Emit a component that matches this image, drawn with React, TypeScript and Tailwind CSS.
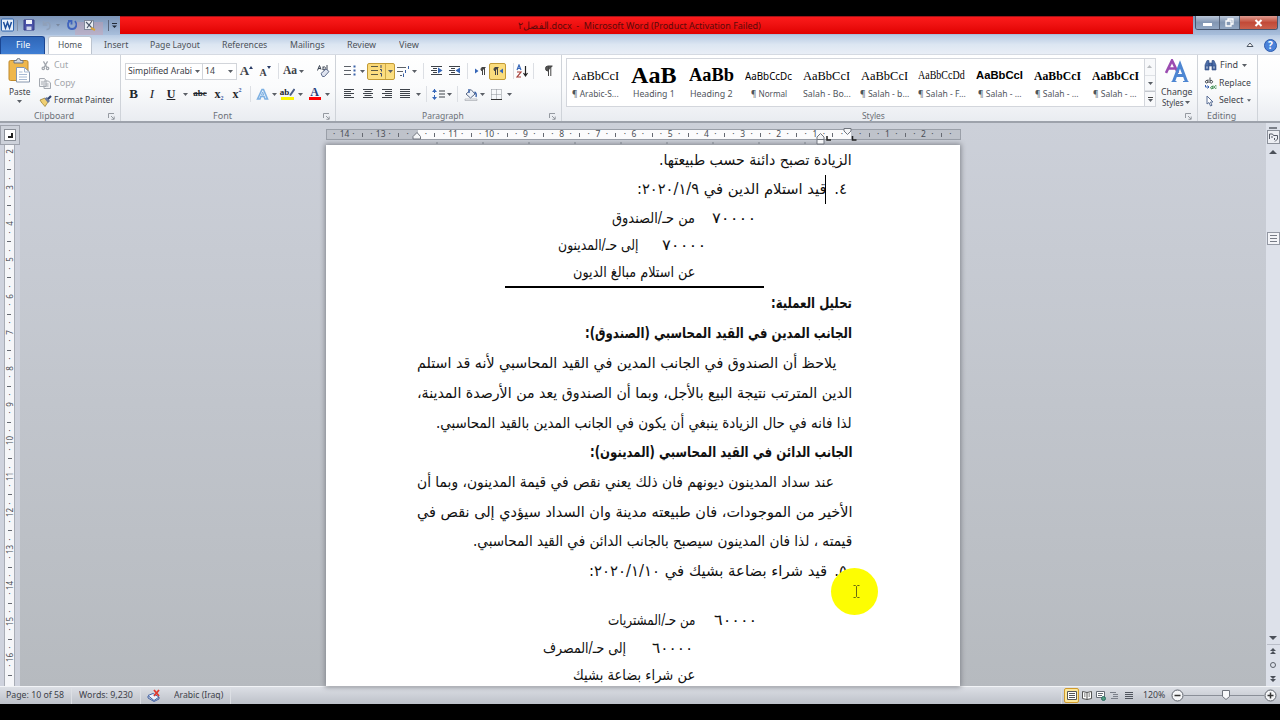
import { useLayoutEffect, useRef, useState } from "react";
import type { ReactNode } from "react";

interface BoxProps {
  className?: string;
  children?: ReactNode;
}

/** Keeps a run of text on one line and stretches it to the given width */
function Fit({ w, rtl, className = "", children }: BoxProps & { w: number; rtl?: boolean }) {
  const ref = useRef<HTMLSpanElement>(null);
  const [scale, setScale] = useState(1);

  useLayoutEffect(() => {
    if (ref.current) setScale(w / ref.current.offsetWidth);
  }, [w, children]);

  return (
    <span dir={rtl ? "rtl" : "ltr"} className={`flex shrink-0 ${className}`} style={{ width: w }}>
      <span
        ref={ref}
        className={`inline-block shrink-0 whitespace-nowrap ${rtl ? "origin-right" : "origin-left"}`}
        style={{ transform: `scaleX(${scale})` }}
      >
        {children}
      </span>
    </span>
  );
}

function Slot({ className = "", children }: BoxProps) {
  return <div className={`flex h-full shrink-0 items-center justify-center ${className}`}>{children}</div>;
}

function Tri({ className = "w-2" }: BoxProps) {
  return (
    <Slot className={className}>
      <svg width="5" height="3" viewBox="0 0 5 3"><path d="M0 0h5L2.5 3z" fill="#5a5f66" /></svg>
    </Slot>
  );
}

function Sep({ className = "w-2" }: BoxProps) {
  return (
    <Slot className={className}>
      <div className="h-4 w-px bg-[#dcdfe4]" />
    </Slot>
  );
}

function Launcher() {
  return (
    <svg width="7" height="7" viewBox="0 0 7 7" fill="none" stroke="#8b9097" strokeWidth="0.9">
      <path d="M.5 5V.5H6M3 3l3 3M6.2 3.5v2.8H3.4" />
    </svg>
  );
}

function Group({ label, w, launcher, className = "", children }: BoxProps & { label: string; w: number; launcher?: boolean }) {
  return (
    <div className={`flex shrink-0 flex-col border-r border-[#cfd3d9] ${className}`}>
      <div className="flex h-[54px] shrink-0 flex-col">{children}</div>
      <div className="flex h-[12px] items-center pt-[3px] text-[#6b7077]">
        <div className="flex flex-1 justify-center">
          <Fit w={w}>{label}</Fit>
        </div>
        <div className="w-3">{launcher && <Launcher />}</div>
      </div>
    </div>
  );
}

/* ---------- title bar ---------- */

function TitleBar() {
  return (
    <div className="flex h-[19px] shrink-0 bg-gradient-to-b from-[#7d95b8] to-[#a9bfdc]">
      <div className="flex w-[120px] items-center">
        <svg width="120" height="19" viewBox="0 0 120 19" fill="none">
          <rect x="75" y="6" width="28" height="13" fill="#d79aa8" opacity=".35" />
          <rect x="1.5" y="3" width="12" height="12" rx="1" fill="#e8f0fa" stroke="#2b62ad" />
          <path d="M3.500 6l2 6 2-5.500 2 5.500 2-6" stroke="#1d4f9c" strokeWidth="1.500" />
          <path d="M17.500 4v11" stroke="#8190a6" />
          <path d="M24 4h10v10H24z" fill="#4a52a8" stroke="#363d86" />
          <path d="M26 4h6v4h-6z" fill="#f2f4fb" />
          <path d="M26.500 10.500h5V14h-5z" fill="#cdd3ea" />
          <path d="M44 8.500c3-3.500 6-2 6 1s-2 4-3.500 4M43.500 5v4h4" stroke="#8fa0b9" strokeWidth="1.600" />
          <path d="M56 8h4l-2 2.500z" fill="#7a899f" />
          <path d="M69.500 5c-2.500 2.500-2 8 2.500 8 4.500 0 5.500-5 3-8M68 5h3.500v3.500" stroke="#3f63bd" strokeWidth="1.800" />
          <rect x="84.500" y="4.500" width="9" height="9" fill="#e9edf3" stroke="#7d8799" />
          <path d="M86 6l7 7M92 5l-5 7" stroke="#4a566a" strokeWidth="1.100" />
          <path d="M91 12l4 2" stroke="#d7a43a" strokeWidth="2" />
          <path d="M108.500 4v11" stroke="#59677d" />
          <path d="M112 7.500h5" stroke="#222b38" />
          <path d="M112 9.500h5l-2.500 2.500z" fill="#222b38" />
        </svg>
      </div>
      <div className="flex h-[18px] w-[1073px] items-center border-t border-[#a41218] bg-gradient-to-b from-[#fb1b1b] to-[#e00000] pt-px pl-[398px] text-[9.500px] text-[#5c0a0a]">
        <Fit w={243}>الفصل٢.docx&nbsp; -&nbsp; Microsoft Word (Product Activation Failed)</Fit>
      </div>
      <div className="ml-[2px] flex h-[14px] overflow-hidden rounded-b-[3px] border border-t-0 border-[#47566e]">
        <div className="flex w-[24px] items-center justify-center border-r border-[#55637a] bg-gradient-to-b from-[#b9c6d8] via-[#8397b3] to-[#92a7c2]">
          <div className="mt-1 h-[3px] w-[9px] bg-white" />
        </div>
        <div className="flex w-[20px] items-center justify-center border-r border-[#55637a] bg-gradient-to-b from-[#b9c6d8] via-[#8397b3] to-[#92a7c2]">
          <svg width="9" height="9" viewBox="0 0 9 9" fill="none" stroke="#fff" strokeWidth="1.300">
            <path d="M3 2.500V1h5v5H6.500M1 3h5v5H1z" />
          </svg>
        </div>
        <div className="flex w-[37px] items-center justify-center bg-gradient-to-b from-[#dc9a90] via-[#c24a38] to-[#c9604c]">
          <svg width="9" height="8" viewBox="0 0 9 8" stroke="#fff" strokeWidth="2"><path d="M1.500 1l6 6M7.500 1l-6 6" /></svg>
        </div>
      </div>
    </div>
  );
}

const tabs = [
  { label: "Insert", slot: "w-[48px]", w: 24 },
  { label: "Page Layout", slot: "w-[70px]", w: 50 },
  { label: "References", slot: "w-[69px]", w: 45 },
  { label: "Mailings", slot: "w-[56px]", w: 35 },
  { label: "Review", slot: "w-[53px]", w: 29 },
  { label: "View", slot: "w-[41px]", w: 20 },
];

function TabBar() {
  return (
    <div className="flex h-[19px] shrink-0 items-end bg-gradient-to-b from-[#b7cae3] via-[#dce6f2] to-[#e9eef6] text-[9.500px] text-[#4c5259]">
      <div className="flex h-[18px] w-[45px] items-center justify-center rounded-t-[3px] border border-b-0 border-[#1b4692] bg-gradient-to-b from-[#2f66b8] to-[#3f7fd4] text-white">
        <Fit w={14}>File</Fit>
      </div>
      <div className="ml-[3px] flex h-[18px] w-[44px] items-center justify-center rounded-t-[3px] border border-b-0 border-[#bcc4cf] bg-white">
        <Fit w={24}>Home</Fit>
      </div>
      {tabs.map((t) => (
        <div key={t.label} className={`flex h-[18px] items-center justify-center ${t.slot}`}>
          <Fit w={t.w}>{t.label}</Fit>
        </div>
      ))}
      <div className="mr-[3px] ml-auto flex h-[18px] items-center gap-[10px]">
        <svg width="8" height="6" viewBox="0 0 8 6" fill="#fff" stroke="#4b5563"><path d="M1 4.500L4 1l3 3.500z" /></svg>
        <div className="flex size-[13px] items-center justify-center rounded-full border border-[#2e5cad] bg-[#4b83da] text-[10px] font-bold text-white">?</div>
      </div>
    </div>
  );
}

/* ---------- ribbon ---------- */

function Clipboard() {
  return (
    <Group label="Clipboard" w={40} launcher className="w-[121px]">
      <div className="flex flex-1">
        <div className="flex w-[39px] flex-col items-center pt-[3px]">
          <svg className="shrink-0" width="23" height="25" viewBox="0 0 23 25" fill="none">
            <rect x="1" y="2.500" width="19" height="20" rx="1.500" fill="#efb74c" stroke="#c08a2c" />
            <path d="M6 5V2.500h2.500a2 2 0 014 0H15V5z" fill="#d5dae1" stroke="#6c7682" />
            <path d="M8.500 9.500h8l5 4.500v10h-13z" fill="#fff" stroke="#8696ad" />
            <path d="M16.500 9.500V14h5M11 14h3.500M11 16.500h8M11 19h8M11 21.500h8" stroke="#a7bad4" />
          </svg>
          <Fit w={21} className="mt-[3px] leading-3">Paste</Fit>
          <Tri className="!h-[6px] w-3" />
        </div>
        <div className="flex flex-col pt-px">
          <div className="flex h-[18px] items-center gap-[4px] pl-[2px] text-[#a3a6ab]">
            <svg width="9" height="11" viewBox="0 0 11 12" fill="none" stroke="#a0a5ac" strokeWidth="1.500">
              <path d="M3 1l4 7M8 1L4 8" /><circle cx="2.800" cy="9.500" r="1.500" /><circle cx="8" cy="9.500" r="1.500" />
            </svg>
            <Fit w={14}>Cut</Fit>
          </div>
          <div className="flex h-[18px] items-center gap-[3px] text-[#a3a6ab]">
            <svg width="12" height="11" viewBox="0 0 12 11" fill="#f3f4f6" stroke="#a4a9b0">
              <path d="M.500.500h5l1.500 2v6H.500zM5 3h4.500L11.500 5v5.500H5z" /><path d="M6.500 6h3M6.500 8h3M2 4h2M2 6h2" />
            </svg>
            <Fit w={21}>Copy</Fit>
          </div>
          <div className="flex h-[17px] items-center gap-[2px]">
            <svg width="13" height="12" viewBox="0 0 13 12" fill="none">
              <path d="M1 5l5-2 3 4-3 4.500C4.500 9.500 2.500 8 1 5z" fill="#f0cf72" stroke="#9a8133" strokeWidth=".8" />
              <path d="M5.500 3.500L9 8l2-2-3-4z" fill="#6c7ca0" />
              <path d="M9 4l3-3" stroke="#2e426e" strokeWidth="2.200" />
            </svg>
            <Fit w={60}>Format Painter</Fit>
          </div>
        </div>
      </div>
    </Group>
  );
}

function FontGroup() {
  return (
    <Group label="Font" w={19} launcher className="w-[215px]">
      <div className="mt-[7px] ml-[4px] flex h-[18px] items-center font-['Liberation_Serif',serif]">
        <div className="flex h-[17px] w-[78px] items-center border border-[#d2d5da] bg-white pl-[2px] font-['Noto_Sans',sans-serif]">
          <Fit w={64}>Simplified Arabi</Fit>
          <Tri className="w-[10px]" />
        </div>
        <div className="flex h-[17px] w-[34px] items-center border border-l-0 border-[#d2d5da] bg-white pl-[2px] font-['Noto_Sans',sans-serif]">
          <Fit w={10}>14</Fit>
          <Tri className="ml-auto w-[11px]" />
        </div>
        <Slot className="w-[19px]">
          <span className="text-[13px] font-bold">A</span>
          <svg className="mb-2" width="4" height="3"><path d="M0 3h4L2 0z" fill="#2b3d68" /></svg>
        </Slot>
        <Slot className="w-[18px]">
          <span className="mt-[3px] text-[10px] font-bold">A</span>
          <svg className="mb-2" width="4" height="3"><path d="M0 0h4L2 3z" fill="#2b3d68" /></svg>
        </Slot>
        <Sep />
        <Slot className="w-[16px] text-[11.500px] font-bold">Aa</Slot>
        <Tri className="w-[7px]" />
        <Slot className="ml-[8px] w-[20px]">
          <svg width="14" height="14" viewBox="0 0 14 14" fill="none">
            <path d="M1.500 6.500l2-5 1.500 4M2 4.500h3M7 6V2.500M7 3.500c2-1.500 3 0 2 1.500S7 6 7 5M11 1v5" stroke="#3c4452" />
            <path d="M5 9.500L10 5l3 2.500-4.500 5H6.500z" fill="#dfe4f0" stroke="#5f6c8c" />
          </svg>
        </Slot>
      </div>
      <div className="mt-[5px] ml-[4px] flex h-[18px] items-center font-['Liberation_Serif',serif] text-[12px] font-bold text-[#22252b]">
        <Slot className="w-[17px] text-[13px]">B</Slot>
        <Slot className="w-[20px] text-[13px] font-normal italic">I</Slot>
        <Slot className="w-[18px] underline">U</Slot>
        <Tri className="w-[10px]" />
        <Slot className="w-[20px] text-[9px] line-through">abc</Slot>
        <Slot className="w-[18px]">x<span className="mt-2 text-[6px] text-[#35569f]">2</span></Slot>
        <Slot className="w-[18px]">x<span className="mb-2 text-[6px] text-[#35569f]">2</span></Slot>
        <Sep />
        <Slot className="w-[17px]">
          <svg width="13" height="13" viewBox="0 0 13 13" fill="none">
            <path d="M1.500 11L6 1.500h1.500L11.500 11H9L8 8.500H4.800L4 11z" fill="#eaf3fc" stroke="#7db0e2" strokeWidth="1.600" />
            <path d="M5.500 7L6.700 4l1 3z" fill="#fff" stroke="#7db0e2" />
          </svg>
        </Slot>
        <Tri className="w-[7px]" />
        <Slot className="ml-[1px] w-[17px] flex-col">
          <div className="flex h-[8px] items-center text-[9px] leading-none">
            ab
            <svg width="6" height="9" viewBox="0 0 6 9"><path d="M5.500 1L1 7.500" stroke="#4d5f86" strokeWidth="2" /></svg>
          </div>
          <div className="mt-[1px] h-[3px] w-[13px] bg-[#fbf500]" />
        </Slot>
        <Tri className="w-[9px]" />
        <Slot className="w-[19px] flex-col">
          <div className="h-[9px] text-[12px] leading-[8px] text-[#253f7c]">A</div>
          <div className="h-[3px] w-[12px] bg-[#f00]" />
        </Slot>
        <Tri className="w-[6px]" />
      </div>
    </Group>
  );
}

function Lines({ d, color = "#3d4249" }: { d: string; color?: string }) {
  return <svg width="12" height="12" viewBox="0 0 12 12" fill="none" stroke={color}><path d={d} /></svg>;
}

function Indent({ flip }: { flip?: boolean }) {
  return (
    <svg width="13" height="12" viewBox="0 0 13 12" fill="none" stroke="#3d4249">
      <path d="M1 1.500h11M3 3.500h4M1 5.500h6M3 7.500h4M1 9.500h11" strokeWidth="1.100" />
      <path d={flip ? "M7.500 5.500l4.500-3v6z" : "M12.500 5.500l-4.500-3v6z"} fill="#3566b8" stroke="none" />
    </svg>
  );
}

function Paragraph() {
  return (
    <Group label="Paragraph" w={42} launcher className="w-[226px]">
      <div className="mt-[7px] ml-[5px] flex h-[18px] items-center">
        <Slot className="w-[17px]">
          <svg width="12" height="12" viewBox="0 0 12 12" stroke="#5c6168">
            <path d="M0 1.500h7M0 5.500h7M0 9.500h7" />
            <path d="M9.500 1.500h2M9.500 5.500h2M9.500 9.500h2" stroke="#3a62a8" strokeWidth="2" />
          </svg>
        </Slot>
        <Tri />
        <div className="ml-px flex h-[17px] w-[28px] items-center rounded-[2px] border border-[#c29b37] bg-gradient-to-b from-[#fbd876] to-[#fbe186]">
          <Slot className="w-[18px] border-r border-[#d0ac49]">
            <svg width="12" height="12" viewBox="0 0 12 12" fill="none" stroke="#5c5a42">
              <path d="M0 1.500h7M0 5.500h7M0 9.500h7" />
              <path d="M10 0v3M9 4.500h1.500v2M9 8.500h1.500v3" stroke="#3f4c6e" />
            </svg>
          </Slot>
          <Tri />
        </div>
        <Slot className="w-[16px]">
          <svg width="13" height="12" viewBox="0 0 13 12" fill="none" stroke="#5c6168">
            <path d="M0 2.500h9M0 6.500h6M3 10.500h2" />
            <path d="M11.500 1v3M8.500 5v3M6.500 8.500V12" stroke="#3a62a8" />
          </svg>
        </Slot>
        <Tri className="w-[7px]" />
        <Sep className="w-[10px]" />
        <Slot className="w-[17px]"><Indent /></Slot>
        <Slot className="w-[18px]"><Indent flip /></Slot>
        <Sep className="w-[8px]" />
        <Slot className="w-[18px]">
          <svg width="12" height="10" viewBox="0 0 12 10"><path d="M1 2.500v5L4.500 5z" fill="#3566b8" /><path d="M8 5a2 2 0 010-3.500h3.500M8.500 1.500V9M10.500 1.500V9" fill="#444" stroke="#444" /></svg>
        </Slot>
        <Slot className="!h-[17px] w-[17px] rounded-[2px] border border-[#c29b37] bg-[#fbdd7d]">
          <svg width="12" height="10" viewBox="0 0 12 10"><path d="M11 2.500v5L7.500 5z" fill="#3566b8" /><path d="M3 5a2 2 0 010-3.500h3.500M3.500 1.500V9M5.500 1.500V9" fill="#444" stroke="#444" /></svg>
        </Slot>
        <Sep className="ml-[5px] w-[4px]" />
        <Slot className="w-[15px]">
          <svg width="13" height="14" viewBox="0 0 13 14" fill="none">
            <path d="M1 6l2-5 2 5M1.800 4.500h2.500" stroke="#3566b8" strokeWidth="1.200" />
            <path d="M1 8h4L1 13h4" stroke="#a33b35" strokeWidth="1.200" />
            <path d="M9.500 2v9M7.500 9l2 3 2-3" stroke="#222" strokeWidth="1.200" />
          </svg>
        </Slot>
        <Sep className="mr-[2px] w-[7px]" />
        <Slot className="w-[18px]">
          <svg width="9" height="12" viewBox="0 0 9 12"><path d="M4 6a2.500 2.500 0 010-5h4.500M4.500 1v10M6.800 1v10" fill="#555" stroke="#444" /></svg>
        </Slot>
      </div>
      <div className="mt-[5px] ml-[4px] flex h-[18px] items-center">
        <Slot className="w-[18px]"><Lines d="M1 1.500h10M1 3.500h7M1 5.500h10M1 7.500h7M1 9.500h10" /></Slot>
        <Slot className="w-[19px]"><Lines d="M1 1.500h10M2.500 3.500h7M1 5.500h10M2.500 7.500h7M1 9.500h10" /></Slot>
        <Slot className="w-[19px]"><Lines d="M1 1.500h10M4 3.500h7M1 5.500h10M4 7.500h7M1 9.500h10" /></Slot>
        <Slot className="w-[18px]"><Lines d="M1 1.500h10M1 3.500h10M1 5.500h10M1 7.500h10M1 9.500h10" /></Slot>
        <Tri className="w-[8px]" />
        <Sep className="w-[8px]" />
        <Slot className="w-[16px]">
          <svg width="13" height="13" viewBox="0 0 13 13" fill="none">
            <path d="M2.500 1v11" stroke="#3566b8" strokeDasharray="4 2" />
            <path d="M0 4l2.500-3L5 4zM0 9l2.500 3L5 9z" fill="#3566b8" />
            <path d="M7 3h6M7 6h6M7 9h6" stroke="#3d4249" strokeWidth="1.200" />
          </svg>
        </Slot>
        <Tri className="w-[7px]" />
        <Sep className="w-[9px]" />
        <Slot className="w-[17px]">
          <svg width="14" height="13" viewBox="0 0 14 13" fill="none">
            <path d="M2 6l5-4.500L11 6l-4.500 4z" fill="#eef2f8" stroke="#5c6b87" />
            <path d="M5 1v4M10.500 4c2 1 2 3 1.500 5" stroke="#3a62a8" strokeWidth="1.400" />
            <path d="M1 11h12v1.500H1z" fill="#f8f8f8" stroke="#a7abb1" strokeWidth=".7" />
          </svg>
        </Slot>
        <Tri className="w-[7px]" />
        <Slot className="w-[20px]">
          <svg width="11" height="11" viewBox="0 0 11 11" fill="none" stroke="#8b9097">
            <path d="M.500.500h10v9M.500.500v9M5.500.500v9M.500 5.500h10" strokeDasharray="1 1" /><path d="M0 10.500h11" stroke="#333" />
          </svg>
        </Slot>
        <Tri className="w-[7px]" />
      </div>
    </Group>
  );
}

const gallery = [
  { sample: "AaBbCcI", name: "¶ Arabic-S...", w: 47, nw: 47, font: "font-['Liberation_Serif',serif] text-[13px]" },
  { sample: "AaB", name: "Heading 1", w: 46, nw: 42, font: "font-['Liberation_Serif',serif] text-[22.500px] font-bold" },
  { sample: "AaBb", name: "Heading 2", w: 45, nw: 43, font: "font-['Liberation_Serif',serif] text-[18px] font-bold" },
  { sample: "AaBbCcDc", name: "¶ Normal", w: 47, nw: 36, font: "pt-px text-[10px]" },
  { sample: "AaBbCcI", name: "Salah - Bo...", w: 47, nw: 48, font: "font-['Liberation_Serif',serif] text-[13px]" },
  { sample: "AaBbCcI", name: "¶ Salah - b...", w: 47, nw: 49, font: "font-['Liberation_Serif',serif] text-[13px]" },
  { sample: "AaBbCcDd", name: "¶ Salah - F...", w: 47, nw: 48, font: "font-['Liberation_Serif',serif] text-[11.500px]" },
  { sample: "AaBbCcI", name: "¶ Salah - ...", w: 47, nw: 44, font: "font-['Liberation_Sans',sans-serif] text-[11.500px] font-bold" },
  { sample: "AaBbCcI", name: "¶ Salah - ...", w: 47, nw: 44, font: "font-['Liberation_Serif',serif] text-[13px] font-bold" },
  { sample: "AaBbCcI", name: "¶ Salah - ...", w: 47, nw: 44, font: "font-['Liberation_Serif',serif] text-[13px] font-bold" },
];

function Styles() {
  return (
    <Group label="Styles" w={23} launcher className="w-[636px]">
      <div className="flex">
        <div className="mt-[3px] ml-[4px] flex h-[49px] w-[590px] border border-[#d3d6dc] bg-white">
          {gallery.map((g, i) => (
            <div key={i} className="flex w-[57.700px] shrink-0 flex-col items-center">
              <div className="flex h-[33px] items-center text-black">
                <Fit w={g.w} className={g.font}>{g.sample}</Fit>
              </div>
              <Fit w={g.nw} className="mt-[-4px] leading-3 text-[#50555c]">{g.name}</Fit>
            </div>
          ))}
          <div className="ml-auto flex w-[11px] flex-col border-l border-[#d3d6dc] bg-[#f8f9fb]">
            <Slot className="!h-[16px] rotate-180 opacity-40"><Tri /></Slot>
            <Slot className="!h-[16px] border-y border-[#dfe2e6]"><Tri /></Slot>
            <Slot className="!h-[15px] flex-col border-t border-[#c3c7cd]">
              <div className="mb-px h-px w-[5px] bg-[#444]" />
              <Tri className="!h-[3px] w-2" />
            </Slot>
          </div>
        </div>
        <div className="flex flex-1 flex-col items-center pt-[4px]">
          <svg className="shrink-0" width="24" height="24" viewBox="0 0 24 24" fill="none">
            <path d="M1 14L7 1.500 13 14M3.500 9.500h7" stroke="#9a4bb0" strokeWidth="2.600" />
            <path d="M8.500 22.500l6.500-17 6.500 17M11 16.500h8" stroke="#4d86d2" strokeWidth="3" />
            <path d="M6.500 22.500h5M18 22.500h5.500" stroke="#4d86d2" />
          </svg>
          <Fit w={31} className="mt-[3px] text-[9px] leading-[11px]">Change</Fit>
          <div className="flex h-[11px] items-center text-[9px]">
            <Fit w={22} className="leading-[11px]">Styles</Fit>
            <Tri />
          </div>
        </div>
      </div>
    </Group>
  );
}

function Editing() {
  return (
    <Group label="Editing" w={29} className="w-[60px]">
      <div className="flex flex-col pt-px pl-[6px]">
        <div className="flex h-[18px] items-center gap-[3px]">
          <svg width="13" height="12" viewBox="0 0 13 12" fill="#4b6da8" stroke="#2f4a80" strokeWidth=".6">
            <path d="M1 11V6l2-4.500h2V11zM12 11V6l-2-4.500H8V11zM5 4h3v3H5z" /><path d="M2 7h2v3H2zM9 7h2v3H9z" fill="#b5c9e8" />
          </svg>
          <Fit w={18}>Find</Fit>
          <Tri className="w-[6px]" />
        </div>
        <div className="flex h-[18px] items-center gap-[2px]">
          <svg width="13" height="13" viewBox="0 0 13 13" fill="none">
            <path d="M4 2.500v3.500M4 4.200c-1.500-1.500-3-.500-2.500 1S3.500 6 4 5M6 .500V6M6 4c1.500-1.500 3 0 2.500 1.200S6.500 6.500 6 5.500" stroke="#3d4249" />
            <path d="M1.500 8v2h3M3.500 8.500L5 10l-1.500 1.500" stroke="#335fb0" />
            <path d="M9 8.500V12M9 10c-1.500-1-2.500 0-2.300 1s1.500 1 2.300 0M12.500 9c-1-.800-2 0-2 1.200s1 1.500 2 .800" stroke="#2d8242" />
          </svg>
          <Fit w={32}>Replace</Fit>
        </div>
        <div className="flex h-[17px] items-center gap-[4px]">
          <svg className="ml-[2px]" width="9" height="12" viewBox="0 0 9 12" fill="#fff" stroke="#5a6f96"><path d="M1 1v8l2-1.500L4.500 11 6 10.300 4.500 7H7z" /></svg>
          <Fit w={24}>Select</Fit>
          <Tri className="w-[4px]" />
        </div>
      </div>
    </Group>
  );
}

/* ---------- rulers ---------- */

const across = ["14", "13", "", "11", "10", "9", "8", "7", "6", "5", "4", "3", "2", "1", "", "1", "2"];
const down = ["2", "3", "4", "5", "6", "7", "8", "9", "10", "11", "12", "13", "14", "15", "16"];

function RulerTop() {
  return (
    <div className="relative ml-[326px] flex h-[11px] w-[635px] items-center overflow-hidden border border-[#9a9fa8] bg-gradient-to-r from-[#bfc3cb] from-[14.300%] via-[#fbfbfc] via-[14.300%] to-[#fbfbfc] text-[8.500px] leading-none text-[#4a4e55]">
      <div className="absolute inset-y-0 right-0 w-[109px] bg-[#bfc3cb]" />
      <span className="relative w-[13px] shrink-0 pl-[6px]">·</span>
      {across.map((n, i) => (
        <div key={i} className="relative flex w-[36.200px] shrink-0 items-center">
          <span className="flex w-[9px] justify-center">{n}</span>
          <span className="flex w-[9px] justify-center">·</span>
          <span className="mx-1 h-[4px] w-px bg-[#666a72]" />
          <span className="flex w-[9px] justify-center">·</span>
        </div>
      ))}
    </div>
  );
}

function RulerSide() {
  return (
    <div className="ml-[4px] flex w-[11px] flex-1 flex-col items-center overflow-hidden border-x border-[#a9adb6] bg-[#f5f6f9] pt-[2px] text-[8px] leading-none text-[#4a4e55]">
      {down.map((n) => (
        <div key={n} className="flex h-[36.150px] shrink-0 flex-col items-center">
          <span className="flex h-[9px] -rotate-90 items-center">{n}</span>
          <span className="flex h-[9px] items-center">·</span>
          <span className="flex h-[9px] items-center"><span className="h-px w-1 bg-[#666a72]" /></span>
          <span className="flex h-[9px] items-center">{n !== "16" && "·"}</span>
        </div>
      ))}
    </div>
  );
}

/* ---------- document ---------- */

interface LineData {
  h: string;
  // distance from the right text margin
  pad?: number;
  parts: { t: string; w: number; gap?: number }[];
  bold?: boolean;
}

const before: LineData[] = [
  { h: "h-[30px]", parts: [{ t: "الزيادة تصبح دائنة حسب طبيعتها.", w: 193 }] },
  { h: "h-[29px]", pad: 5, parts: [{ t: "٤.", w: 13 }, { t: "قيد استلام الدين في ٢٠٢٠/١/٩:", w: 190, gap: 7 }] },
  { h: "h-[28px]", pad: 96, parts: [{ t: "٧٠٠٠٠", w: 44 }, { t: "من حـ/الصندوق", w: 83, gap: 17 }] },
  { h: "h-[27px]", pad: 146, parts: [{ t: "٧٠٠٠٠", w: 44 }, { t: "إلى حـ/المدينون", w: 80, gap: 24 }] },
  { h: "h-[27px]", pad: 157, parts: [{ t: "عن استلام مبالغ الديون", w: 122 }] },
];

const after: LineData[] = [
  { h: "h-[30px]", bold: true, parts: [{ t: "تحليل العملية:", w: 81 }] },
  { h: "h-[30px]", bold: true, parts: [{ t: "الجانب المدين في القيد المحاسبي (الصندوق):", w: 267 }] },
  { h: "h-[30px]", pad: 16, parts: [{ t: "يلاحظ أن الصندوق في الجانب المدين في القيد المحاسبي لأنه قد استلم", w: 419 }] },
  { h: "h-[30px]", parts: [{ t: "الدين المترتب نتيجة البيع بالأجل، وبما أن الصندوق يعد من الأرصدة المدينة،", w: 435 }] },
  { h: "h-[30px]", parts: [{ t: "لذا فانه في حال الزيادة ينبغي أن يكون في الجانب المدين بالقيد المحاسبي.", w: 416 }] },
  { h: "h-[29px]", bold: true, parts: [{ t: "الجانب الدائن في القيد المحاسبي (المدينون):", w: 262 }] },
  { h: "h-[30px]", pad: 18, parts: [{ t: "عند سداد المدينون ديونهم فان ذلك يعني نقص في قيمة المدينون، وبما أن", w: 417 }] },
  { h: "h-[30px]", parts: [{ t: "الأخير من الموجودات، فان طبيعته مدينة وان السداد سيؤدي إلى نقص في", w: 435 }] },
  { h: "h-[29px]", parts: [{ t: "قيمته ، لذا فان المدينون سيصبح بالجانب الدائن في القيد المحاسبي.", w: 379 }] },
  { h: "h-[30px]", pad: 5, parts: [{ t: "٥.", w: 13 }, { t: "قيد شراء بضاعة بشيك في ٢٠٢٠/١/١٠:", w: 238, gap: 7 }] },
  { h: "h-[20px]", parts: [] },
  { h: "h-[28px]", pad: 95, parts: [{ t: "٦٠٠٠٠", w: 43 }, { t: "من حـ/المشتريات", w: 87, gap: 19 }] },
  { h: "h-[28px]", pad: 159, parts: [{ t: "٦٠٠٠٠", w: 41 }, { t: "إلى حـ/المصرف", w: 83, gap: 26 }] },
  { h: "h-[26px]", pad: 157, parts: [{ t: "عن شراء بضاعة بشيك", w: 122 }] },
];

function DocLine({ line }: { line: LineData }) {
  return (
    <div dir="rtl" className={`flex shrink-0 items-center ${line.h} ${line.bold ? "font-bold" : ""}`} style={{ paddingRight: line.pad ?? 0 }}>
      {line.parts.map((p) => (
        <div key={p.t} style={{ marginRight: p.gap ?? 0 }}>
          <Fit rtl w={p.w}>{p.t}</Fit>
        </div>
      ))}
    </div>
  );
}

function Page() {
  return (
    <div className="relative ml-[326px] flex h-[541px] w-[634px] flex-col overflow-hidden bg-white pr-[108px] pl-[91px] font-['DejaVu_Sans',sans-serif] text-[15px] text-[#111] shadow-[0_0_5px_1px_#80848b]">
      {before.map((l, i) => <DocLine key={i} line={l} />)}
      <div className="ml-[88px] h-[2px] w-[259px] shrink-0 bg-black" />
      {after.map((l, i) => <DocLine key={i} line={l} />)}
      {/* text caret */}
      <div className="absolute top-[30px] left-[499px] h-[29px] w-px bg-black" />
      {/* pointer with its highlight */}
      <div className="absolute top-[423px] left-[505px] flex size-[47px] items-center justify-center rounded-full bg-[#fdfd02]">
        <svg className="ml-[3px]" width="7" height="13" viewBox="0 0 7 13" fill="none" stroke="#6b6b10"><path d="M.500.500h2l1 1 1-1h2M3.500 1.500v10M.500 12.500h2l1-1 1 1h2" /></svg>
      </div>
    </div>
  );
}

function Scrollbar() {
  return (
    <div className="flex w-[14px] shrink-0 flex-col items-center bg-[#dde1ea] pt-[4px]">
      <div className="h-[2px] w-[8px] bg-[#7b8089]" />
      <div className="mt-[1px] flex h-[14px] w-[13px] items-center justify-center border border-[#8c919b] bg-[#eceef3]">
        <svg width="9" height="9" viewBox="0 0 9 9" fill="none" stroke="#555a66"><path d="M.500 6V1h3l1 1.500h4V6L6 8.500M2 4h2M5.500 5v2" /></svg>
      </div>
      <svg className="mt-[6px]" width="8" height="4"><path d="M0 4h8L4 0z" fill="#4b5059" /></svg>
      <div className="mt-[78px] flex h-[13px] w-[13px] flex-col items-center justify-center gap-[2px] border border-[#9398a3] bg-[#f3f4f8]">
        <div className="h-px w-[7px] bg-[#777c86]" />
        <div className="h-px w-[7px] bg-[#777c86]" />
        <div className="h-px w-[7px] bg-[#777c86]" />
      </div>
      <div className="mt-auto flex flex-col items-center pb-[4px]">
        <svg width="8" height="4"><path d="M0 0h8L4 4z" fill="#4b5059" /></svg>
        <div className="mt-[4px] h-px w-[13px] bg-[#b9bdc7]" />
        <svg className="mt-[3px]" width="6" height="6"><path d="M0 3l3-3 3 3zM0 6l3-3 3 3z" fill="#4b5059" /></svg>
        <div className="my-[8px] size-[6px] rounded-full border border-[#5b6069]" />
        <svg width="6" height="6"><path d="M0 0l3 3 3-3zM0 3l3 3 3-3z" fill="#4b5059" /></svg>
      </div>
    </div>
  );
}

function StatusBar() {
  return (
    <div className="flex h-[18px] shrink-0 items-center border-t border-[#f2f4f7] bg-gradient-to-b from-[#dcdfe5] to-[#bdc1c9] pl-[6px] text-[9.500px] text-[#3d4249]">
      <Fit w={58}>Page: 10 of 58</Fit>
      <Sep className="w-[15px]" />
      <Fit w={54}>Words: 9,230</Fit>
      <Sep className="w-[14px]" />
      <svg width="14" height="13" viewBox="0 0 14 13" fill="none">
        <path d="M1 6.500l5-2 6 3.500-5 3.500z" fill="#eef2fa" stroke="#4666a8" /><path d="M1 7v2l6 3.500L12 10V8" stroke="#4666a8" />
        <path d="M7 1l5 6M12 1L7 7" stroke="#e0392d" strokeWidth="1.800" />
      </svg>
      <Fit w={49} className="ml-[13px]">Arabic (Iraq)</Fit>
      <Sep className="w-[15px]" />
      <div className="mr-[3px] ml-auto flex h-full items-center">
        <Sep className="w-[5px]" />
        <Slot className="!h-[15px] w-[15px] rounded-[2px] border-[1.500px] border-[#d09a2c] bg-[#fce79a]">
          <svg width="10" height="9" viewBox="0 0 10 9" fill="#fff" stroke="#555"><path d="M.500.500h9v8h-9zM2 2.500h6M2 4.500h6M2 6.500h6" /></svg>
        </Slot>
        <Slot className="w-[15px]">
          <svg width="10" height="9" viewBox="0 0 10 9" fill="#fff" stroke="#555"><path d="M5 1.500L.500.500v7l4.500 1 4.500-1v-7zM5 1.500v7M2 3h1.500M2 5h1.500M6.500 3H8M6.500 5H8" /></svg>
        </Slot>
        <Slot className="w-[13px]">
          <svg width="10" height="10" viewBox="0 0 10 10" fill="#fff" stroke="#666c76"><path d="M.500.500h8v6h-8zM2 2.500h5M2 4.500h4" /><circle cx="7.500" cy="7.500" r="2" fill="#4f9a7d" stroke="#2f6f66" /></svg>
        </Slot>
        <Slot className="w-[15px]"><svg width="9" height="8" stroke="#7b808a"><path d="M0 .500h6M3 2.500h5M3 4.500h5M1 6.500h7" /></svg></Slot>
        <Slot className="w-[15px]"><svg width="9" height="8" stroke="#50555e"><path d="M0 .500h8M0 2.500h8M0 4.500h8M0 6.500h8" /></svg></Slot>
        <Fit w={22} className="mr-[6px] ml-[6px]">120%</Fit>
        <svg width="106" height="14" viewBox="0 0 106 14" fill="none">
          <path d="M13 6.500h80" stroke="#8a8f98" />
          <circle cx="6.500" cy="6.500" r="5.500" fill="#f5f6f8" stroke="#5d626b" /><path d="M3.500 6.500h6" stroke="#333" strokeWidth="1.500" />
          <path d="M51.500 1.500h7v6L55 10.500l-3.500-3z" fill="#f8f9fb" stroke="#6f747d" />
          <circle cx="99.500" cy="6.500" r="5.500" fill="#f5f6f8" stroke="#5d626b" /><path d="M96.500 6.500h6M99.500 3.500v6" stroke="#333" strokeWidth="1.500" />
        </svg>
      </div>
    </div>
  );
}

export default function App() {
  return (
    <div className="flex h-[720px] w-[1280px] flex-col overflow-hidden bg-black py-4 font-['Noto_Sans',sans-serif] text-[9.500px] text-[#3d4249]">
      <TitleBar />
      <TabBar />
      <div className="flex h-[69px] shrink-0 border-t border-b-2 border-t-[#d5dae2] border-b-[#9da2ab] bg-gradient-to-b from-white via-[#fafbfc] to-[#e9ecf1]">
        <Clipboard />
        <FontGroup />
        <Paragraph />
        <Styles />
        <Editing />
      </div>
      <div className="flex min-h-0 flex-1 bg-gradient-to-b from-[#ccd0d9] to-[#b6babf]">
        <div className="flex w-[20px] shrink-0 flex-col bg-[#cfd3de]">
          <div className="mt-[2px] flex h-[20px] items-center justify-center border border-[#9fa3ad] bg-[#cdd1da]">
            <div className="flex size-[12px] items-center justify-center border border-[#8b9099] bg-white">
              <svg width="5" height="5" fill="none" stroke="#222" strokeWidth="2"><path d="M0 4h4V0" /></svg>
            </div>
          </div>
          <RulerSide />
        </div>
        <div className="relative flex w-[1246px] flex-col">
          <div className="-ml-[20px] flex h-[22px] shrink-0 flex-col pt-[6px]">
            <RulerTop />
          </div>
          <div className="-ml-[20px]">
            <Page />
          </div>
          {/* indent markers and tab stops */}
          <svg className="absolute top-0 left-[390px]" width="480" height="22" viewBox="0 0 480 22" fill="#f4f5f7" stroke="#70757e">
            <path d="M3 16v-2.500l4-4 3.500 4V16z" />
            <path d="M434 5.500h7v2.500l-3.500 3.500L434 8z" />
            <path d="M407 16.500v-2.500l3.500-3.500 3.500 3.500v7h-7zM407 16.500h7" />
            <path d="M417 13v4h4M442.500 13v4h4" fill="none" stroke="#222" strokeWidth="1.500" />
            <path d="M27 19v2M73 19v2M119 19v2M165 19v2M211 19v2M257 19v2M303 19v2M349 19v2M395 19v2" stroke="#7b8089" />
          </svg>
        </div>
        <Scrollbar />
      </div>
      <StatusBar />
    </div>
  );
}
